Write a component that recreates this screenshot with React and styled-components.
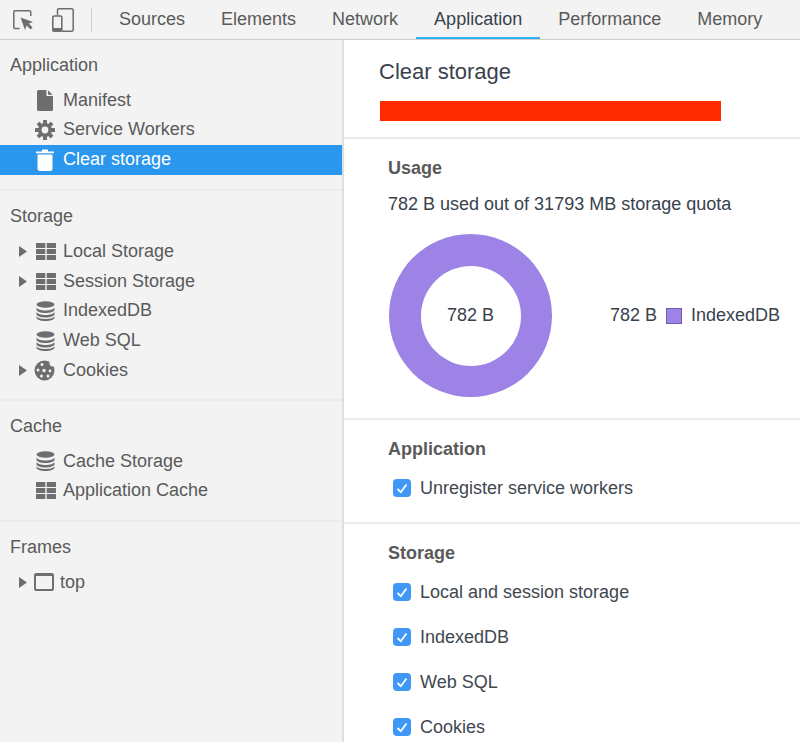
import React from 'react'
import styled, { createGlobalStyle } from 'styled-components'

const Global = createGlobalStyle`
  html, body { margin: 0; padding: 0; background: #fff; }
  body { font-family: "Liberation Sans", Arial, sans-serif; }
`

const Page = styled.div`
  width: 800px;
  height: 742px;
  overflow: hidden;
  display: flex;
  flex-direction: column;
  color: #5a5a5a;
  font-size: 18px;
`

const Toolbar = styled.div`
  height: 39px;
  flex: none;
  display: flex;
  align-items: stretch;
  background: #f3f3f3;
  border-bottom: 1px solid #cdcdcd;
`

const ToolIcons = styled.div`
  width: 91px;
  flex: none;
  display: flex;
  align-items: center;
  gap: 19px;
  padding-left: 13px;
  box-sizing: border-box;
`

const ToolSep = styled.div`
  width: 1px;
  height: 24px;
  background: #cfcfcf;
  align-self: center;
  flex: none;
`

const Tabs = styled.div`
  display: flex;
  padding-left: 9px;
`

const Tab = styled.div`
  padding: 0 18px;
  line-height: 38px;
  height: 39px;
  box-sizing: border-box;
  white-space: nowrap;
  color: ${p => (p.$active ? '#38424d' : '#5a5a5a')};
  border-bottom: 2px solid ${p => (p.$active ? '#2fb1f5' : 'transparent')};
`

const Body = styled.div`
  flex: 1;
  display: flex;
  min-height: 0;
`

const Sidebar = styled.div`
  width: 342px;
  flex: none;
  background: #f3f3f3;
  border-right: 2px solid #dedede;
`

const SideSection = styled.div`
  padding-top: 10px;
  padding-bottom: ${p => p.$pb || 14}px;
  border-bottom: 2px solid #ebebeb;
  &:last-child { border-bottom: 0; }
`

const SideHeader = styled.div`
  height: 30px;
  line-height: 30px;
  padding-left: 10px;
  margin-bottom: 5.25px;
`

const Row = styled.div`
  height: 29.75px;
  display: flex;
  align-items: center;
  background: ${p => (p.$selected ? '#2a96ee' : 'transparent')};
  color: ${p => (p.$selected ? '#fff' : '#5a5a5a')};
`

const ArrowSlot = styled.div`
  width: 34px;
  flex: none;
  display: flex;
  justify-content: flex-end;
  padding-right: 7px;
  box-sizing: border-box;
`

const IconSlot = styled.div`
  width: ${p => p.$w || 29}px;
  padding-left: ${p => p.$pl ?? 2}px;
  box-sizing: border-box;
  flex: none;
  display: flex;
  align-items: center;
`

const Main = styled.div`
  flex: 1;
  background: #fff;
  min-width: 0;
`

const TitleBlock = styled.div`
  height: 99px;
  padding: 17px 0 0 35px;
  box-sizing: border-box;
  border-bottom: 2px solid #ebebeb;
`

const Title = styled.div`
  font-size: 22px;
  line-height: 29px;
  color: #38424d;
`

const RedBar = styled.div`
  width: 341px;
  height: 20px;
  margin: 15px 0 0 1px;
  background: #ff2a00;
`

const Section = styled.div`
  padding: 14px 0 0 44px;
  height: ${p => p.$h}px;
  box-sizing: border-box;
  border-bottom: ${p => (p.$last ? '0' : '2px solid #ebebeb')};
`

const SectionTitle = styled.div`
  font-weight: bold;
  line-height: 30px;
  color: #5a5a5a;
`

const UsageText = styled.div`
  margin-top: 9px;
  line-height: 24px;
  color: #38424d;
`

const UsageRow = styled.div`
  display: flex;
  align-items: center;
  margin-top: 18px;
  padding-left: 1px;
`

const Donut = styled.div`
  width: 163px;
  height: 163px;
  border-radius: 50%;
  background: #9d83e6;
  display: flex;
  align-items: center;
  justify-content: center;
  flex: none;
`

const DonutHole = styled.div`
  width: 100px;
  height: 100px;
  border-radius: 50%;
  background: #fff;
  color: #38424d;
  display: flex;
  align-items: center;
  justify-content: center;
`

const Legend = styled.div`
  margin-left: 58px;
  display: flex;
  align-items: center;
  color: #38424d;
  white-space: nowrap;
`

const Swatch = styled.div`
  width: 14px;
  height: 14px;
  margin: 0 9px;
  background: #9d83e6;
  border: 1px solid #6f5bb0;
`

const CheckRow = styled.div`
  height: 30px;
  margin-top: ${p => p.$mt || 0}px;
  display: flex;
  align-items: center;
  color: #3f4750;
  white-space: nowrap;
`

const Box = styled.div`
  width: 18px;
  height: 18px;
  margin: 0 9px 0 5px;
  border-radius: 4px;
  background: #3f97f6;
  display: flex;
  align-items: center;
  justify-content: center;
  flex: none;
`

const Arrow = () => (
  <svg width="8" height="11" viewBox="0 0 8 11"><path d="M0 0 L8 5.500 L0 11Z" fill="#6e6e6e" /></svg>
)

const FileIcon = ({ c = '#6e6e6e' }) => (
  <svg width="16" height="21" viewBox="0 0 16 21">
    <path d="M1.500 0H9.500V6H16V19.500A1.500 1.500 0 0 1 14.500 21H1.500A1.500 1.500 0 0 1 0 19.500V1.500A1.500 1.500 0 0 1 1.500 0Z" fill={c} />
    <path d="M11 0.300 15.700 4.700H11Z" fill={c} />
  </svg>
)

const GearIcon = ({ c = '#6e6e6e' }) => (
  <svg width="20" height="20" viewBox="-10 -10 20 20">
    <g fill={c}>
      {[0, 45, 90, 135, 180, 225, 270, 315].map(a => (
        <rect key={a} x="-2" y="-10" width="4" height="5" rx="0.6" transform={`rotate(${a})`} />
      ))}
    </g>
    <circle r="5.200" fill="none" stroke={c} strokeWidth="3.600" />
  </svg>
)

const TrashIcon = ({ c = '#fff' }) => (
  <svg width="18" height="22" viewBox="0 0 18 22">
    <path d="M0 2.500H18V4.200H0Z M6 0.500h6v2.500H6Z" fill={c} />
    <path d="M1.500 5.500H16.500V19.500a2.500 2.500 0 0 1-2.500 2.500H4a2.500 2.500 0 0 1-2.500-2.500Z" fill={c} />
  </svg>
)

const GridIcon = ({ c = '#6e6e6e' }) => (
  <svg width="20" height="17" viewBox="0 0 20 17">
    <g fill={c}>
      {[0, 6, 12].map(y => (
        <g key={y}>
          <rect x="0" y={y} width="9.300" height="5" rx="0.5" />
          <rect x="10.700" y={y} width="9.300" height="5" rx="0.5" />
        </g>
      ))}
    </g>
  </svg>
)

const DbIcon = ({ c = '#6e6e6e' }) => (
  <svg width="19" height="20" viewBox="0 0 19 20">
    <ellipse cx="9.500" cy="3.500" rx="9" ry="3.200" fill={c} />
    <path d="M0.500 6.500c1 2 4.500 3 9 3s8-1 9-3v2.200c0 1.800-4 3.200-9 3.200s-9-1.400-9-3.200Z" fill={c} />
    <path d="M0.500 11c1 2 4.500 3 9 3s8-1 9-3v2.200c0 1.800-4 3.200-9 3.200s-9-1.400-9-3.200Z" fill={c} />
    <path d="M0.500 15.300c1 2 4.500 2.700 9 2.700s8-.7 9-2.700v1.500c0 1.800-4 3.200-9 3.200s-9-1.400-9-3.200Z" fill={c} />
  </svg>
)

const CookieIcon = ({ c = '#6e6e6e' }) => (
  <svg width="21" height="21" viewBox="0 0 21 21">
    <circle cx="10.500" cy="10.500" r="10" fill={c} />
    <circle cx="19" cy="3" r="3.500" fill="#f3f3f3" />
    <g fill="#f3f3f3">
      <circle cx="8" cy="4.500" r="1.500" />
      <circle cx="4" cy="10" r="1.500" />
      <circle cx="10" cy="10.500" r="1.700" />
      <circle cx="16" cy="11" r="1.400" />
      <circle cx="7.500" cy="16" r="1.500" />
      <circle cx="14" cy="16" r="1.500" />
    </g>
  </svg>
)

const FrameIcon = () => (
  <svg width="20" height="18" viewBox="0 0 20 18">
    <rect x="1" y="1" width="18" height="16" rx="1.500" fill="none" stroke="#6e6e6e" strokeWidth="2" />
    <rect x="1" y="1" width="18" height="2" fill="#6e6e6e" />
  </svg>
)

const InspectIcon = () => (
  <svg width="20" height="20" viewBox="0 0 20 20">
    <path d="M6.500 18.500H2A1.300 1.300 0 0 1 0.800 17.200V2A1.300 1.300 0 0 1 2 0.800H16.500A1.300 1.300 0 0 1 17.800 2V6" fill="none" stroke="#6e6e6e" strokeWidth="1.500" />
    <path d="M7.500 7.500 20 12l-4.200 1.500 3.700 4-2 2-3.800-4L12 20Z" fill="#6e6e6e" />
  </svg>
)

const DeviceIcon = () => (
  <svg width="22" height="24" viewBox="0 0 22 24">
    <path d="M5.500 7V2A1.300 1.300 0 0 1 6.800 0.800H19.700A1.300 1.300 0 0 1 21.200 2V22A1.300 1.300 0 0 1 19.700 23.200H10" fill="none" stroke="#6e6e6e" strokeWidth="1.500" />
    <rect x="0.800" y="8" width="9" height="15.200" rx="1.300" fill="none" stroke="#6e6e6e" strokeWidth="1.600" />
    <rect x="0.800" y="20" width="9" height="3.200" fill="#6e6e6e" />
  </svg>
)

const Check = () => (
  <svg width="12" height="11" viewBox="0 0 12 11">
    <path d="M1.500 6 4.800 9.200 10.500 1.500" fill="none" stroke="#fff" strokeWidth="1.800" />
  </svg>
)

const SideRow = ({ arrow, icon, pl, w, label, selected }) => (
  <Row $selected={selected}>
    <ArrowSlot>{arrow && <Arrow />}</ArrowSlot>
    <IconSlot $pl={pl} $w={w}>{icon}</IconSlot>
    {label}
  </Row>
)

const Option = ({ label, mt }) => (
  <CheckRow $mt={mt}>
    <Box><Check /></Box>
    {label}
  </CheckRow>
)

export default function App() {
  const tabs = ['Sources', 'Elements', 'Network', 'Application', 'Performance', 'Memory']
  return (
    <Page>
      <Global />
      <Toolbar>
        <ToolIcons>
          <InspectIcon />
          <DeviceIcon />
        </ToolIcons>
        <ToolSep />
        <Tabs>
          {tabs.map(t => (
            <Tab key={t} $active={t === 'Application'}>{t}</Tab>
          ))}
        </Tabs>
      </Toolbar>
      <Body>
        <Sidebar>
          <SideSection $pb={14.75}>
            <SideHeader>Application</SideHeader>
            <SideRow icon={<FileIcon />} pl={3} label="Manifest" />
            <SideRow icon={<GearIcon />} pl={1} label="Service Workers" />
            <SideRow icon={<TrashIcon />} label="Clear storage" selected />
          </SideSection>
          <SideSection $pb={13.75}>
            <SideHeader>Storage</SideHeader>
            <SideRow arrow icon={<GridIcon />} label="Local Storage" />
            <SideRow arrow icon={<GridIcon />} label="Session Storage" />
            <SideRow icon={<DbIcon />} label="IndexedDB" />
            <SideRow icon={<DbIcon />} label="Web SQL" />
            <SideRow arrow icon={<CookieIcon />} pl={0} label="Cookies" />
          </SideSection>
          <SideSection $pb={14.5}>
            <SideHeader>Cache</SideHeader>
            <SideRow icon={<DbIcon />} label="Cache Storage" />
            <SideRow icon={<GridIcon />} label="Application Cache" />
          </SideSection>
          <SideSection>
            <SideHeader>Frames</SideHeader>
            <SideRow arrow icon={<FrameIcon />} pl={0} w={26} label="top" />
          </SideSection>
        </Sidebar>
        <Main>
          <TitleBlock>
            <Title>Clear storage</Title>
            <RedBar />
          </TitleBlock>
          <Section $h={281}>
            <SectionTitle>Usage</SectionTitle>
            <UsageText>782 B used out of 31793 MB storage quota</UsageText>
            <UsageRow>
              <Donut><DonutHole>782 B</DonutHole></Donut>
              <Legend>782 B<Swatch />IndexedDB</Legend>
            </UsageRow>
          </Section>
          <Section $h={104}>
            <SectionTitle>Application</SectionTitle>
            <Option label="Unregister service workers" mt={9} />
          </Section>
          <Section $last $h={219}>
            <SectionTitle>Storage</SectionTitle>
            <Option label="Local and session storage" mt={9} />
            <Option label="IndexedDB" mt={15} />
            <Option label="Web SQL" mt={15} />
            <Option label="Cookies" mt={15} />
          </Section>
        </Main>
      </Body>
    </Page>
  )
}
